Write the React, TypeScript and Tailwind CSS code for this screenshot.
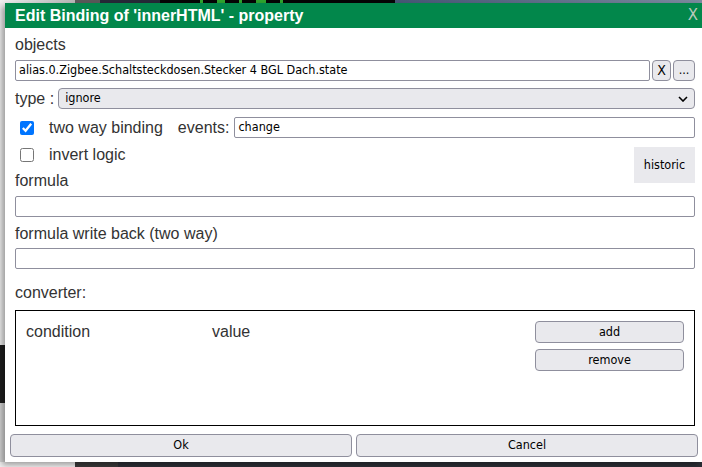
import React from 'react';

const ctl = "font-['DejaVu_Sans_Condensed','DejaVu_Sans',sans-serif] text-[12.5px] text-black";
const label = "font-['Liberation_Sans',Arial,sans-serif] text-[16px] leading-[20px] text-[#333]";

const TextBox = ({ value, className = '' }: { value?: string; className?: string }) => (
    <div className={`h-[21px] bg-white border border-[#8f8f9d] rounded-[2px] flex items-center px-[3px] ${ctl} ${className}`}>
        {value}
    </div>
);

const Btn = ({ children, className = '' }: { children: React.ReactNode; className?: string }) => (
    <div className={`bg-[#e9e9ed] border border-[#8f8f9d] rounded-[4px] flex items-center justify-center ${ctl} ${className}`}>
        {children}
    </div>
);

export default function App() {
    return (
        <div className="w-[702px] h-[467px] overflow-hidden flex flex-col bg-[#1c1f26]">
            {/* page behind the dialog */}
            <div className="h-[3px] flex shrink-0">
                <div className="w-[75px] bg-gradient-to-r from-[#f0f0f0] to-[#b8b8b8]" />
                <div className="w-[25px] bg-[#5a5a5a]" />
                <div className="w-[60px] bg-[#262a38]" />
                <div className="w-[235px] bg-[#050505] flex gap-[14px] pl-[40px]">
                    <div className="w-[3px] bg-[#2fa52f]" />
                    <div className="w-[8px] bg-[#2fa52f]" />
                    <div className="w-[3px] bg-[#2fa52f]" />
                    <div className="w-[10px] bg-[#2fa52f]" />
                    <div className="w-[3px] bg-[#2fa52f]" />
                </div>
                <div className="flex-1 bg-gradient-to-r from-[#465876] to-[#7d8ba0]" />
            </div>
            <div className="flex flex-1 min-h-0">
                <div className="w-[5px] flex flex-col">
                    <div className="h-[342px] bg-[#ececec]" />
                    <div className="h-[58px] bg-[#1e1e1e]" />
                    <div className="flex-1 bg-[#d4d4d4]" />
                </div>
                {/* dialog */}
                <div className="relative z-10 flex-1 bg-white flex flex-col shadow-[-3px_3px_6px_rgba(0,0,0,0.35)]">
                    <div className="h-[25px] bg-[#02874b] flex items-center justify-between pl-[10px] pr-[4px]">
                        <span className="font-['Liberation_Sans',Arial,sans-serif] font-bold text-[16px] text-white">Edit Binding of 'innerHTML' - property</span>
                        <span className="font-['DejaVu_Sans',sans-serif] text-[15px] text-[#b9c9bd]">X</span>
                    </div>
                    <div className="flex flex-col pl-[10px] pr-[7px] pt-[7px]">
                        <div className={label}>objects</div>
                        <div className="mt-[5px] flex gap-[2px]">
                            <TextBox className="flex-1" value="alias.0.Zigbee.Schaltsteckdosen.Stecker 4 BGL Dach.state" />
                            <Btn className="w-[19px] h-[21px] text-[14px]">X</Btn>
                            <Btn className="w-[22px] h-[21px]">...</Btn>
                        </div>
                        <div className="mt-[7px] flex items-center gap-[4px]">
                            <span className={label}>type :</span>
                            <div className={`flex-1 h-[21px] bg-[#e9e9ed] border border-[#8f8f9d] rounded-[4px] flex items-center justify-between pl-[6px] pr-[6px] ${ctl}`}>
                                <span>ignore</span>
                                <svg width="10" height="6" viewBox="0 0 10 6" fill="none" stroke="#000" strokeWidth="1.6">
                                    <path d="M1 1l4 4 4-4" />
                                </svg>
                            </div>
                        </div>
                        <div className="mt-[8px] flex items-center">
                            <input type="checkbox" defaultChecked className="ml-[5px] w-[14px] h-[14px] m-0 accent-[#0075ff]" />
                            <span className={`${label} ml-[15px]`}>two way binding</span>
                            <span className={`${label} ml-[15px]`}>events:</span>
                            <TextBox className="ml-[5px] flex-1 h-[20px]" value="change" />
                        </div>
                        <div className="mt-[9px] flex items-start justify-between">
                            <div className="flex flex-col">
                                <div className="flex items-center h-[16px]">
                                    <input type="checkbox" className="ml-[5px] w-[14px] h-[14px] m-0" />
                                    <span className={`${label} ml-[15px]`}>invert logic</span>
                                </div>
                                <div className={`${label} mt-[8px]`}>formula</div>
                            </div>
                            <div className={`w-[61px] h-[36px] bg-[#e9e9ed] flex items-center justify-center ${ctl}`}>historic</div>
                        </div>
                        <TextBox className="mt-[5px]" />
                        <div className={`${label} mt-[7px]`}>formula write back (two way)</div>
                        <TextBox className="mt-[4px]" />
                        <div className={`${label} mt-[14px]`}>converter:</div>
                        <div className="mt-[7px] h-[116px] border border-black flex pl-[10px] pr-[10px] pt-[10px]">
                            <div className={`${label} w-[186px] h-[22px] leading-[22px]`}>condition</div>
                            <div className={`${label} flex-1 h-[22px] leading-[22px]`}>value</div>
                            <div className="flex flex-col gap-[6px]">
                                <Btn className="w-[149px] h-[22px]">add</Btn>
                                <Btn className="w-[149px] h-[22px]">remove</Btn>
                            </div>
                        </div>
                    </div>
                    <div className="mt-[8px] flex gap-[4px] pl-[5px] pr-[4px]">
                        <Btn className="flex-1 h-[23px]">Ok</Btn>
                        <Btn className="flex-1 h-[23px]">Cancel</Btn>
                    </div>
                </div>
            </div>
            <div className="h-[5px] shrink-0 flex">
                <div className="w-[75px] bg-[#f2f2f2]" />
                <div className="w-[43px] bg-[#3a3a3a]" />
                <div className="flex-1 bg-[#2c2f36]" />
            </div>
        </div>
    );
}
